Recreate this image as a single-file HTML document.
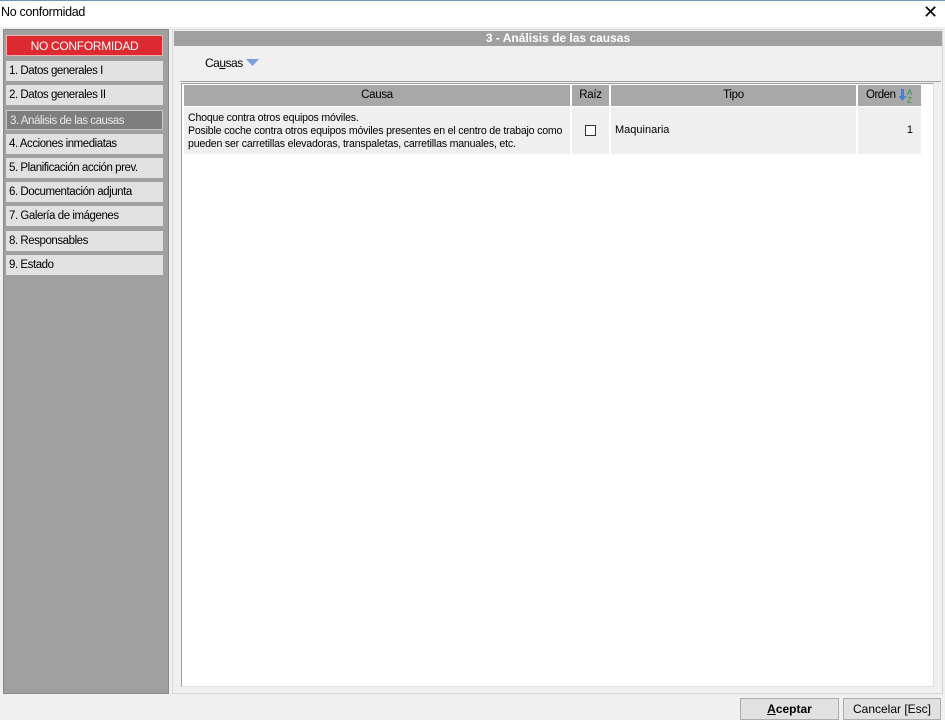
<!DOCTYPE html>
<html><head><meta charset="utf-8"><style>
*{margin:0;padding:0;box-sizing:border-box}
body{width:945px;height:720px;background:#f0f0f0;font-family:"Liberation Sans",sans-serif;font-size:12px;color:#000;position:relative;overflow:hidden}
.a{position:absolute;white-space:nowrap}
.title{left:0;top:0;width:945px;height:27px;background:#fff}
.item{position:absolute;left:6px;width:157px;height:20px;background:#e1e1e1;line-height:20px;padding-left:3px;font-size:11.5px;letter-spacing:-0.45px;white-space:nowrap}
.th{position:absolute;top:85px;height:21px;background:#a8a8a8;line-height:21px;text-align:center;font-size:11.5px;letter-spacing:-0.3px}
.td{position:absolute;top:107px;height:47px;background:#efefef;font-size:11px;white-space:nowrap}
.btn{position:absolute;top:698px;height:22px;border:1px solid #adadad;background:#e1e1e1;text-align:center;line-height:20px;font-size:12px}
</style></head><body>
<div class="a title"></div>
<div class="a" style="left:0;top:0;width:945px;height:1px;background:#6f95c4"></div>
<div class="a" style="left:1px;top:5px;font-size:12.5px;letter-spacing:-0.3px">No conformidad</div>
<div class="a" style="left:923px;top:2px;font-size:18px">✕</div>

<div class="a" style="left:3px;top:29px;width:166px;height:665px;background:#a0a0a0;border:1px solid #8a8a8a"></div>
<div class="a" style="left:6px;top:35px;width:157px;height:21px;background:#dc2a30;color:#fff;text-align:center;line-height:21px;font-size:12px;letter-spacing:-0.3px;border:1px solid #f4b0b0">NO CONFORMIDAD</div>
<div class="item" style="top:61px">1. Datos generales I</div>
<div class="item" style="top:85px">2. Datos generales II</div>
<div class="item" style="top:110px;background:#7e7e7e;color:#e8e8e8;border:1px solid #c8c8c8">3. Análisis de las causas</div>
<div class="item" style="top:134px">4. Acciones inmediatas</div>
<div class="item" style="top:158px">5. Planificación acción prev.</div>
<div class="item" style="top:182px">6. Documentación adjunta</div>
<div class="item" style="top:206px">7. Galería de imágenes</div>
<div class="item" style="top:231px">8. Responsables</div>
<div class="item" style="top:255px">9. Estado</div>

<div class="a" style="left:172px;top:29px;width:771px;height:665px;border:1px solid #d8d8d8;background:#f0f0f0"></div>
<div class="a" style="left:174px;top:31px;width:768px;height:15px;background:#a0a0a0;color:#fff;font-weight:bold;text-align:center;line-height:15px;font-size:12px">3 - Análisis de las causas</div>
<div class="a" style="left:205px;top:56px;font-size:12px;letter-spacing:-0.5px">Ca<u>u</u>sas</div>
<svg class="a" style="left:246px;top:59px" width="13" height="8"><path d="M0 0H13L6.5 7Z" fill="#7d9ee0"/></svg>
<div class="a" style="left:180px;top:81px;width:761px;height:1px;background:#a0a0a0"></div>
<div class="a" style="left:181px;top:83px;width:753px;height:604px;background:#fff;border:1px solid #a0a0a0;border-right-color:#e0e0e0;border-bottom-color:#e0e0e0"></div>

<div class="th" style="left:184px;width:386px">Causa</div>
<div class="th" style="left:572px;width:37px">Raíz</div>
<div class="th" style="left:611px;width:245px">Tipo</div>
<div class="th" style="left:858px;width:63px;text-align:left;padding-left:8px;letter-spacing:-0.5px">Orden<svg style="position:absolute;left:40px;top:2px" width="16" height="17"><path d="M3 2V9H0.5L4.5 14L8.5 9H6V2Z" fill="#4a7fd6"/><text x="9" y="8" font-size="8" fill="#2a9a3a" font-family="Liberation Sans">A</text><text x="9" y="16" font-size="8" fill="#2a9a3a" font-family="Liberation Sans">Z</text></svg></div>

<div class="td" style="left:184px;width:386px;padding:5px 0 0 4px;line-height:13px;font-size:10.6px;letter-spacing:-0.2px">Choque contra otros equipos móviles.<br>Posible coche contra otros equipos móviles presentes en el centro de trabajo como<br>pueden ser carretillas elevadoras, transpaletas, carretillas manuales, etc.</div>
<div class="td" style="left:572px;width:37px"><div style="position:absolute;left:13px;top:18px;width:11px;height:11px;border:1px solid #333;background:#fff"></div></div>
<div class="td" style="left:611px;width:245px;padding:17px 0 0 4px">Maquinaria</div>
<div class="td" style="left:858px;width:63px;text-align:right;padding:17px 8px 0 0">1</div>

<div class="btn" style="left:740px;width:99px;font-weight:bold"><u>A</u>ceptar</div>
<div class="btn" style="left:843px;width:98px">Cancelar [Esc]</div>
</body></html>
